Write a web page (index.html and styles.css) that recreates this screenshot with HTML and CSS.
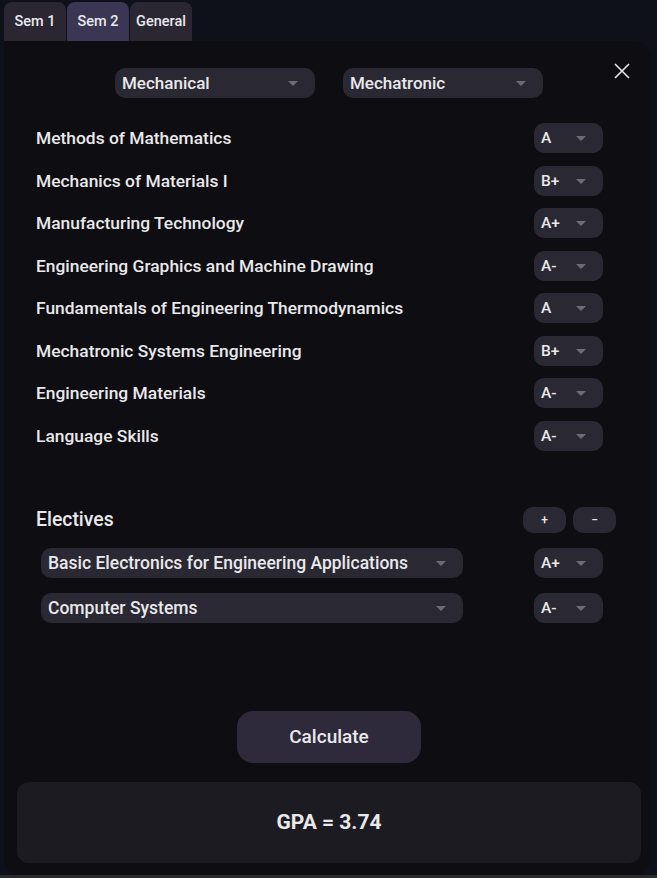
FILE: index.html
```html
<!DOCTYPE html>
<html lang="en">
<head>
    <meta charset="UTF-8">
    <meta name="viewport" content="width=device-width, initial-scale=1.0">
    <title>GPA Calculator</title>
    <link rel="stylesheet" href="styles.css">
</head>
<body>
    <div class="tabs">
        <div class="tab">Sem 1</div>
        <div class="tab active">Sem 2</div>
        <div class="tab">General</div>
    </div>
    <div class="panel">
        <div class="top-row">
            <div class="select wide">Mechanical<span class="caret"></span></div>
            <div class="select wide">Mechatronic<span class="caret"></span></div>
            <button class="close" aria-label="Close">
                <svg width="16" height="16" viewBox="0 0 16 16"><path d="M1 1L15 15M15 1L1 15" stroke="#e6e6ea" stroke-width="1.6" fill="none"/></svg>
            </button>
        </div>

        <div class="courses">
            <div class="course"><span>Methods of Mathematics</span><div class="select grade">A<span class="caret"></span></div></div>
            <div class="course"><span>Mechanics of Materials I</span><div class="select grade">B+<span class="caret"></span></div></div>
            <div class="course"><span>Manufacturing Technology</span><div class="select grade">A+<span class="caret"></span></div></div>
            <div class="course"><span>Engineering Graphics and Machine Drawing</span><div class="select grade">A-<span class="caret"></span></div></div>
            <div class="course"><span>Fundamentals of Engineering Thermodynamics</span><div class="select grade">A<span class="caret"></span></div></div>
            <div class="course"><span>Mechatronic Systems Engineering</span><div class="select grade">B+<span class="caret"></span></div></div>
            <div class="course"><span>Engineering Materials</span><div class="select grade">A-<span class="caret"></span></div></div>
            <div class="course"><span>Language Skills</span><div class="select grade">A-<span class="caret"></span></div></div>
        </div>

        <div class="electives-head">
            <span>Electives</span>
            <div class="pm">
                <button class="small-btn">+</button>
                <button class="small-btn">&minus;</button>
            </div>
        </div>
        <div class="electives">
            <div class="elective">
                <div class="select long">Basic Electronics for Engineering Applications<span class="caret"></span></div>
                <div class="select grade">A+<span class="caret"></span></div>
            </div>
            <div class="elective">
                <div class="select long">Computer Systems<span class="caret"></span></div>
                <div class="select grade">A-<span class="caret"></span></div>
            </div>
        </div>

        <div class="calc-wrap">
            <button class="calc">Calculate</button>
        </div>
        <div class="result">GPA = 3.74</div>
    </div>
    <div class="status"></div>
</body>
</html>
```

FILE: styles.css
```css
* { box-sizing: border-box; }
body { margin: 0; height: 878px; overflow: hidden; background: #0e111a; font-family: Roboto, "Liberation Sans", sans-serif; font-weight: 500; color: #e9e9ec; }
button { font-family: inherit; font-weight: inherit; color: inherit; border: none; cursor: pointer; }

.tabs { display: flex; gap: 1px; padding: 2px 0 0 4px; height: 41px; }
.tab { width: 62px; height: 39px; display: flex; align-items: center; justify-content: center; background: #2a2732; border-radius: 8px 8px 0 0; font-size: 14.5px; }
.tab.active { background: #3a3653; }

.panel { margin: 0 7px 0 4px; height: 834px; background: #0e0d12; border-radius: 0 16px 16px 16px; padding: 27px 9px 12px 13px; display: flex; flex-direction: column; }

.top-row { display: flex; justify-content: center; gap: 28px; position: relative; }
.close { position: absolute; right: 7px; top: -9px; width: 24px; height: 24px; background: none; padding: 4px; }

.select { position: relative; height: 30px; background: #2a2832; border-radius: 10px; display: flex; align-items: center; padding-left: 7px; font-size: 17px; }
.caret { position: absolute; top: 13px; border-left: 5px solid transparent; border-right: 5px solid transparent; border-top: 5px solid #6e6b77; }
.select.wide { width: 200px; }
.select.wide .caret { right: 17px; }
.select.grade { width: 69px; font-size: 15.5px; }
.select.grade .caret { right: 17px; }
.select.long { width: 422px; font-size: 17.5px; }
.select.long .caret { right: 17px; }

.courses { display: flex; flex-direction: column; gap: 12.5px; margin-top: 25px; padding: 0 38px 0 19px; }
.course { display: flex; justify-content: space-between; align-items: center; font-size: 17.4px; }

.electives-head { display: flex; justify-content: space-between; align-items: center; margin-top: 56px; padding: 0 25px 0 19px; height: 26px; font-size: 19.4px; }
.pm { display: flex; gap: 7px; }
.small-btn { width: 43px; height: 26px; border-radius: 10px; background: #2a2832; font-size: 12px; padding: 0; }

.electives { display: flex; flex-direction: column; gap: 15px; margin-top: 15px; padding: 0 38px 0 24px; }
.elective { display: flex; justify-content: space-between; align-items: center; }

.calc-wrap { display: flex; justify-content: center; margin-top: 88px; }
.calc { width: 184px; height: 52px; border-radius: 16px; background: #2e2a3b; font-size: 19px; }

.result { margin-top: 19px; height: 81px; background: #1c1b21; border-radius: 12px; display: flex; align-items: center; justify-content: center; font-size: 21px; font-weight: 700; }

.status { height: 3px; background: #2b2b2d; }
```
